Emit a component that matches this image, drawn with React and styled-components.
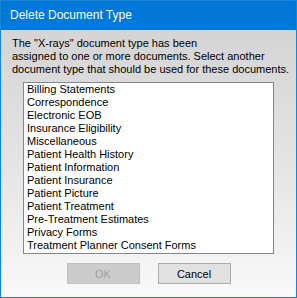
import React from "react";
import styled, { createGlobalStyle } from "styled-components";

const GlobalStyle = createGlobalStyle`
    html, body {
        margin: 0;
        padding: 0;
        background: #ffffff;
    }
    * {
        box-sizing: border-box;
    }
`;

const documentTypes = [
    "Billing Statements",
    "Correspondence",
    "Electronic EOB",
    "Insurance Eligibility",
    "Miscellaneous",
    "Patient Health History",
    "Patient Information",
    "Patient Insurance",
    "Patient Picture",
    "Patient Treatment",
    "Pre-Treatment Estimates",
    "Privacy Forms",
    "Treatment Planner Consent Forms",
];

const App = () => {
    return (
        <>
            <GlobalStyle />
            <Window>
                <TitleBar>Delete Document Type</TitleBar>
                <Body>
                    <Message>
                        The "X-rays" document type has been
                        <br />
                        assigned to one or more documents. Select another
                        <br />
                        document type that should be used for these documents.
                    </Message>
                    <ListBox>
                        {documentTypes.map((name) => (
                            <ListItem key={name}>{name}</ListItem>
                        ))}
                    </ListBox>
                    <ButtonRow>
                        <Button disabled>OK</Button>
                        <Button>Cancel</Button>
                    </ButtonRow>
                </Body>
            </Window>
        </>
    );
};

export default App;

const Window = styled.div`
    width: 297px;
    height: 298px;
    border: 1px solid #1883d7;
    display: flex;
    flex-direction: column;
    font-family: "Liberation Sans", Arial, sans-serif;
`;

const TitleBar = styled.div`
    height: 29px;
    flex-shrink: 0;
    background: #0078d7;
    color: #ffffff;
    font-size: 12px;
    display: flex;
    align-items: center;
    padding-left: 9px;
    padding-bottom: 1px;
`;

const Body = styled.div`
    flex: 1;
    display: flex;
    flex-direction: column;
    padding: 7px 0 0 0;
    background: linear-gradient(to bottom, #d4d4d4 0%, #e6e6e6 55%, #f9f9f9 100%);
`;

const Message = styled.div`
    font-size: 11px;
    line-height: 13px;
    color: #000000;
    padding-left: 11px;
    white-space: nowrap;
`;

const ListBox = styled.div`
    margin: 6px 0 0 22px;
    width: 251px;
    height: 172px;
    border: 1px solid #828790;
    background: #ffffff;
    padding: 0 0 0 3px;
    overflow: hidden;
`;

const ListItem = styled.div`
    font-size: 11px;
    line-height: 13px;
    color: #000000;
    white-space: nowrap;
`;

const ButtonRow = styled.div`
    display: flex;
    justify-content: center;
    gap: 18px;
    margin-top: 9px;
`;

const Button = styled.button`
    width: 73px;
    height: 21px;
    padding: 0;
    font-family: "Liberation Sans", Arial, sans-serif;
    font-size: 11px;
    border: 1px solid ${({ disabled }) => (disabled ? "#bfbfbf" : "#adadad")};
    background: ${({ disabled }) => (disabled ? "#cccccc" : "#e1e1e1")};
    color: ${({ disabled }) => (disabled ? "#a0a0a0" : "#000000")};
    border-radius: 0;
`;
